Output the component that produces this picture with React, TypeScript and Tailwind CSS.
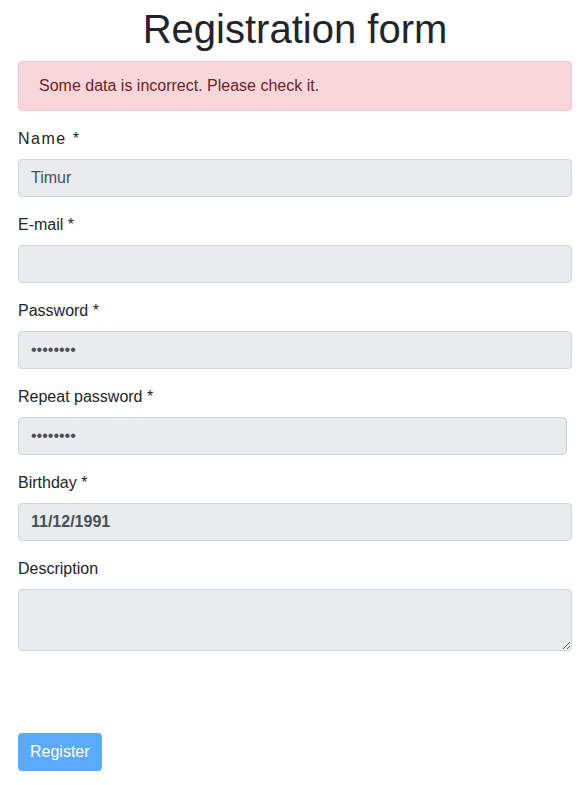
import React from "react";

const inputCls =
  "block h-[38px] w-full rounded border border-[#ced4da] bg-[#e9ecef] px-3 text-base text-[#495057] outline-none";

function Field({
  label,
  children,
  labelClass = "",
}: {
  label: string;
  children: React.ReactNode;
  labelClass?: string;
}) {
  return (
    <div className="mb-4">
      <label className={"mb-2 block text-base leading-6 text-[#212529] " + labelClass}>
        {label}
      </label>
      {children}
    </div>
  );
}

export default function App() {
  return (
    <div
      className="min-h-[785px] bg-white pt-[5px] pl-[18px] pr-[11px]"
      style={{ fontFamily: '"Liberation Sans", Arial, sans-serif' }}
    >
      <h1 className="mb-2 text-center text-[40px] leading-[48px] font-normal text-[#212529]">
        Registration form
      </h1>

      <div className="mb-4 rounded border border-[#f5c6cb] bg-[#f8d7da] px-5 py-3 text-base leading-6 text-[#721c24]">
        Some data is incorrect. Please check it.
      </div>

      <form onSubmit={(e) => e.preventDefault()}>
        <Field label="Name *" labelClass="tracking-[1.5px]">
          <input className={inputCls} type="text" value="Timur" readOnly />
        </Field>

        <Field label="E-mail *">
          <input className={inputCls} type="email" value="" readOnly />
        </Field>

        <Field label="Password *">
          <input className={inputCls} type="password" value="12345678" readOnly />
        </Field>

        <Field label="Repeat password *">
          <input
            className={inputCls + " !w-[549px]"}
            type="password"
            value="12345678"
            readOnly
          />
        </Field>

        <Field label="Birthday *">
          <input className={inputCls + " font-bold"} type="text" value="11/12/1991" readOnly />
        </Field>

        <Field label="Description">
          <textarea
            className="block h-[62px] w-full resize-y rounded border border-[#ced4da] bg-[#e9ecef] px-3 py-1.5 text-base text-[#495057] outline-none"
            rows={2}
            readOnly
          />
        </Field>

        <button
          type="submit"
          className="mt-[66px] h-[38px] rounded bg-[#5aabff] px-3 text-base leading-6 text-white"
        >
          Register
        </button>
      </form>
    </div>
  );
}
